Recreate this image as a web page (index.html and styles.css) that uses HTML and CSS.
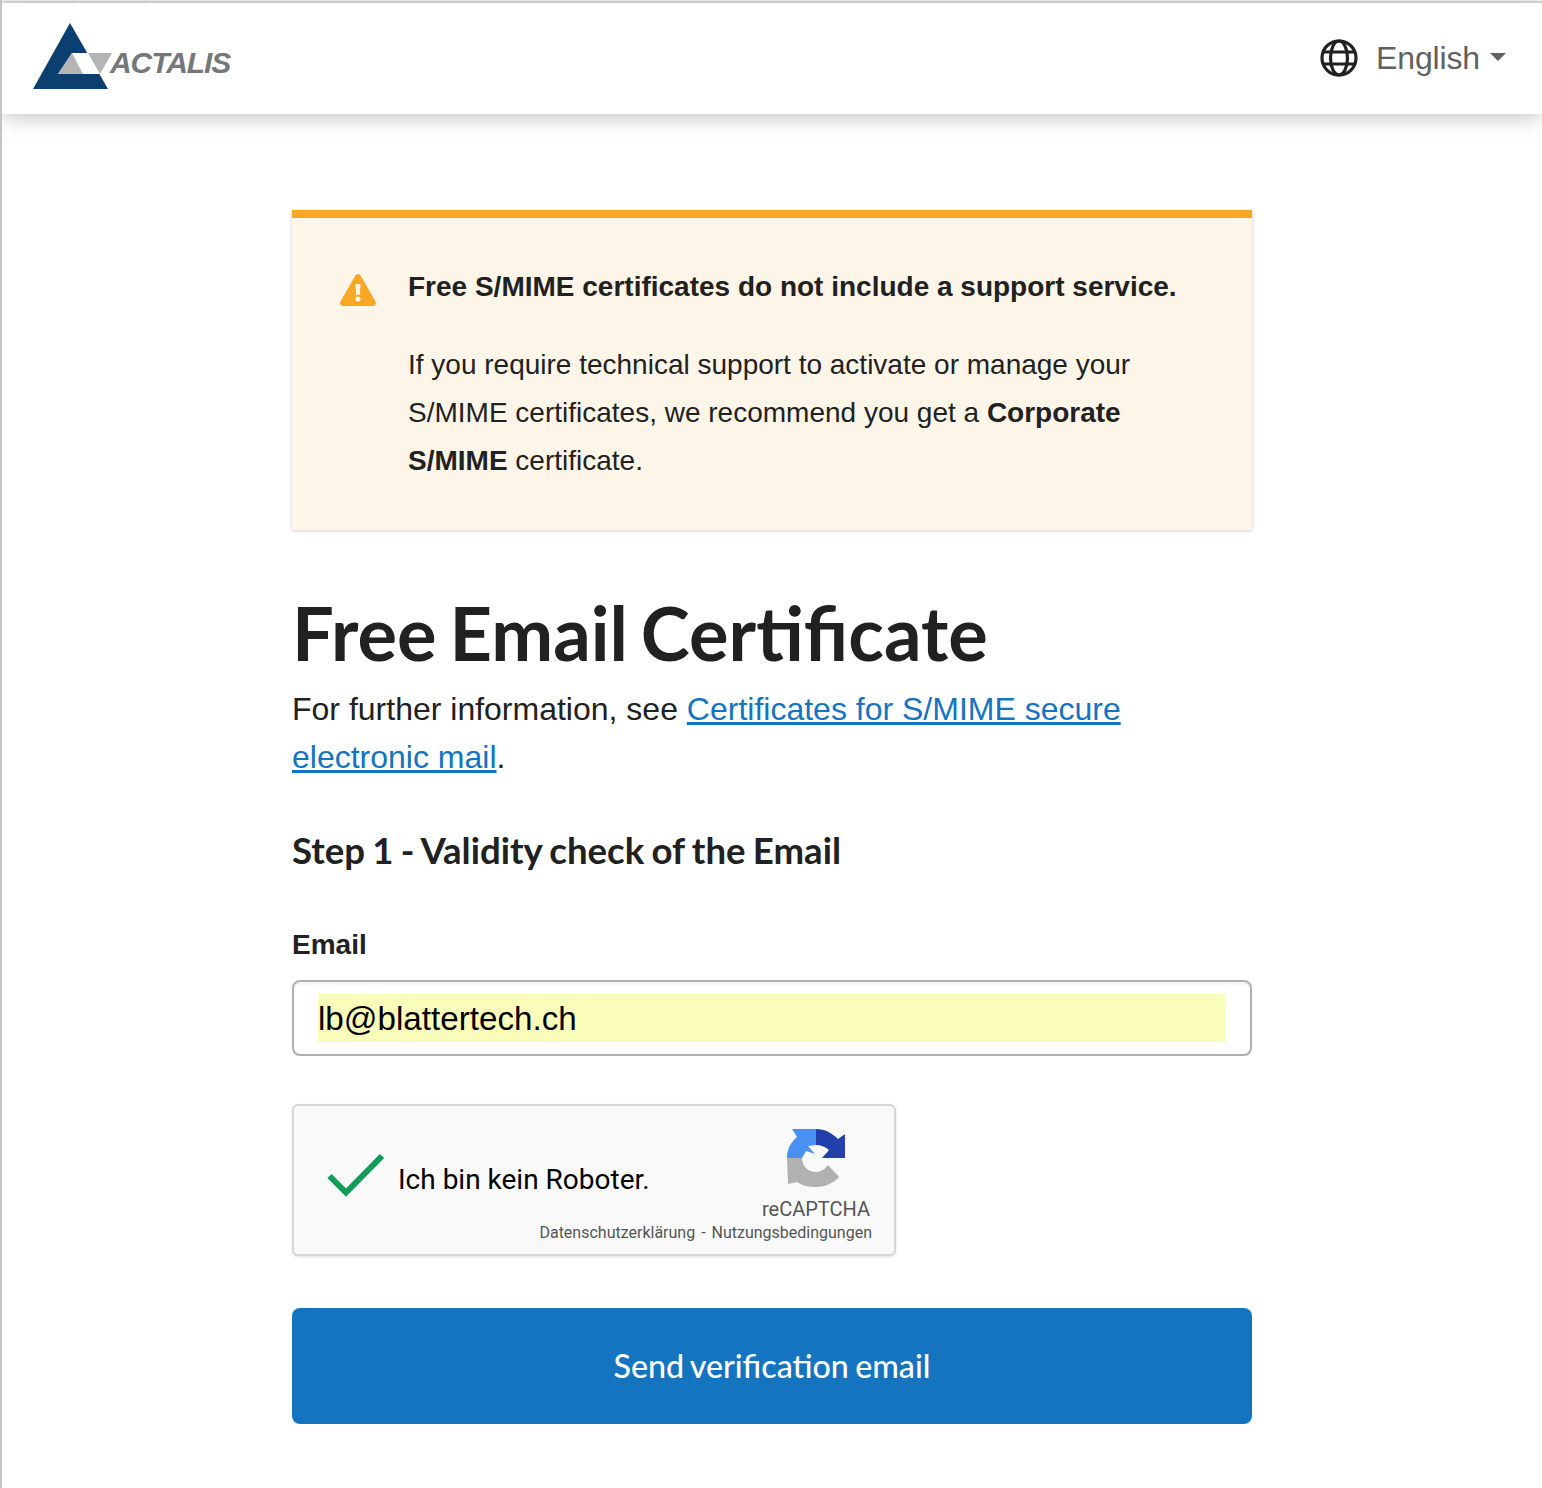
FILE: index.html
```html
<!DOCTYPE html>
<html lang="en">
<head>
    <meta charset="UTF-8">
    <meta name="viewport" content="width=device-width, initial-scale=1.0">
    <title>Free Email Certificate</title>
    <link rel="stylesheet" href="styles.css">
</head>
<body>
    <div class="tabstrip"><span class="tab"></span><span class="tab"></span></div>
    <header class="topbar">
        <a class="logo" href="#">
            <svg class="logo-mark" width="80" height="68" viewBox="0 0 80 68">
                <path fill="#0b3f6f" d="M37 0 L75 66 L0 66 Z"/>
                <path fill="#ffffff" d="M39 30 L66 30 L66 51 L25 51 Z"/>
                <path fill="#b4b6b6" d="M25 51 L39 30 L50 51 Z"/>
                <path fill="#b4b6b6" d="M55 30 L79 30 L67 51 Z"/>
            </svg>
            <span class="logo-text">ACTALIS</span>
        </a>
        <div class="lang">
            <svg class="globe" width="38" height="38" viewBox="0 0 38 38" fill="none" stroke="#212121" stroke-width="3.200">
                <circle cx="19" cy="19" r="17"/>
                <ellipse cx="19" cy="19" rx="8.500" ry="17"/>
                <path d="M3 13 H35 M3 25 H35"/>
            </svg>
            <span class="lang-name">English</span>
            <span class="caret"></span>
        </div>
    </header>

    <main class="content">
        <section class="notice">
            <svg class="notice-icon" width="36" height="32" viewBox="0 0 36 32">
                <path fill="#f9a825" d="M15.400 1.500 a3 3 0 0 1 5.200 0 L35.500 27.500 a3 3 0 0 1 -2.600 4.500 H3.100 a3 3 0 0 1 -2.600 -4.500 Z"/>
                <path fill="#fdf5e8" d="M15.500 10 h5 l-.7 11 h-3.600 Z"/>
                <circle fill="#fdf5e8" cx="18" cy="25" r="2.600"/>
            </svg>
            <div class="notice-body">
                <p class="notice-title">Free S/MIME certificates do not include a support service.</p>
                <p>If you require technical support to activate or manage your S/MIME certificates, we recommend you get a <strong>Corporate S/MIME</strong> certificate.</p>
            </div>
        </section>

        <h1>Free Email Certificate</h1>
        <p class="intro">For further information, see <a href="#">Certificates for S/MIME secure electronic mail</a>.</p>

        <h2>Step 1 - Validity check of the Email</h2>

        <form class="form">
            <label class="field-label" for="email">Email</label>
            <div class="input-box">
                <input id="email" type="text" value="lb@blattertech.ch">
            </div>

            <div class="captcha">
                <svg class="captcha-check" width="58" height="44" viewBox="0 0 58 44" fill="none">
                    <path d="M2.500 23 L19 39.500 L55 3" stroke="#0f9d58" stroke-width="6"/>
                </svg>
                <span class="captcha-text">Ich bin kein Roboter.</span>
                <div class="captcha-brand">
                    <svg class="captcha-logo" width="62" height="62" viewBox="0 0 62 62">
                        <path fill="#4a90f0" d="M1 30 C1 21 5 14 11 9 L6 1 H30 V17 L22 18 L29 26 L20 23 L16 30 Z"/>
                        <path fill="#2440ab" d="M30 1 C39 1 46 5 52 11 L59 6 V30 H36 L43 22 C40 19 35 17 30 17 Z"/>
                        <path fill="#b1b1b1" d="M1 30 H16 C16 38 22 44 30 44 C35 44 39 41 42 37 L53 49 C48 55 39 59 30 59 C22 59 15 57 11 54 L2 56 Z"/>
                    </svg>
                    <span class="captcha-name">reCAPTCHA</span>
                    <span class="captcha-links">Datenschutzerklärung - Nutzungsbedingungen</span>
                </div>
            </div>

            <button class="send-btn" type="button">Send verification email</button>
        </form>
    </main>
</body>
</html>
```

FILE: styles.css
```css
* {
    box-sizing: border-box;
}
body {
    margin: 0;
    min-height: 1488px;
    background-color: white;
    color: #212121;
    font-family: "Liberation Sans", sans-serif;
    font-size: 28px;
    border-left: 2px solid #c4c4c4;
    overflow: hidden;
}
.tabstrip {
    display: flex;
    height: 3px;
    border-bottom: 2px solid #dcdcdc;
    background-color: #f4f4f4;
}
.tab {
    width: 72px;
    border-right: 1px solid #d4d4d4;
}
.topbar {
    display: flex;
    justify-content: space-between;
    align-items: center;
    height: 111px;
    padding: 0 36px 0 31px;
    background-color: white;
    box-shadow: 0 4px 20px rgba(0, 0, 0, 0.22);
}
.logo {
    display: flex;
    align-items: center;
    text-decoration: none;
    margin-top: -3px;
}
.logo-mark {
    filter: blur(0.4px);
}
.logo-text {
    margin-left: -3px;
    margin-top: 12px;
    font-family: "Liberation Sans", sans-serif;
    font-size: 30px;
    font-weight: bold;
    font-style: italic;
    letter-spacing: -1.100px;
    color: #757778;
}
.lang {
    display: flex;
    align-items: center;
    margin-top: -1px;
    color: #616161;
    font-size: 32px;
}
.globe {
    filter: blur(0.3px);
}
.lang-name {
    margin-left: 18px;
    letter-spacing: -0.150px;
}
.caret {
    margin-left: 10px;
    margin-top: -2px;
    border-top: 8px solid #616161;
    border-left: 8px solid transparent;
    border-right: 8px solid transparent;
}
.content {
    width: 960px;
    margin: 96px 0 0 290px;
}
.notice {
    display: flex;
    height: 320px;
    padding: 60px 40px 0 48px;
    background-color: #fdf5e8;
    border-top: 8px solid #f9a825;
    box-shadow: 0 1px 4px rgba(0, 0, 0, 0.2);
    line-height: 48px;
}
.notice-icon {
    flex-shrink: 0;
    margin-top: -4px;
}
.notice-body {
    margin-left: 32px;
    margin-top: -15px;
}
.notice-body p {
    margin: 0;
}
.notice-body .notice-title {
    margin-bottom: 30px;
    font-weight: bold;
}
strong {
    font-weight: bold;
}
h1 {
    margin: 55px 0 0;
    font-family: Lato, sans-serif;
    font-size: 74px;
    font-weight: bold;
    word-spacing: -5px;
    line-height: 96px;
}
.intro {
    margin: 4px 0 0;
    font-size: 32px;
    line-height: 48px;
}
.intro a {
    color: #1474bf;
}
h2 {
    margin: 45px 0 0;
    font-family: Lato, sans-serif;
    font-size: 36.600px;
    font-weight: bold;
    word-spacing: -1.600px;
    line-height: 48px;
}
.form {
    margin-top: 47px;
}
.field-label {
    display: block;
    font-weight: bold;
    line-height: 48px;
}
.input-box {
    margin-top: 11px;
    height: 76px;
    padding: 12px 24px;
    border: 2px solid #b0b0b0;
    border-radius: 8px;
    box-shadow: inset 0 2px 4px rgba(0, 0, 0, 0.06);
}
.input-box input {
    display: block;
    width: 100%;
    height: 48px;
    padding: 2px 0 0;
    border: none;
    outline: none;
    background-color: #fafdb9;
    color: black;
    font-family: "Liberation Sans", sans-serif;
    font-size: 33.200px;
}
.captcha {
    display: flex;
    align-items: center;
    width: 604px;
    height: 152px;
    margin-top: 48px;
    padding: 0 22px 0 33px;
    background-color: #f9f9f9;
    border: 2px solid #d6d6d6;
    border-radius: 6px;
    box-shadow: 0 1px 3px rgba(0, 0, 0, 0.12);
    position: relative;
    font-family: Roboto, sans-serif;
}
.captcha-check {
    margin-bottom: 10px;
    filter: blur(0.5px);
}
.captcha-text {
    margin-left: 13px;
    margin-bottom: 2px;
    color: black;
    font-size: 28px;
}
.captcha-brand {
    position: absolute;
    right: 22px;
    top: 22px;
    display: flex;
    flex-direction: column;
    align-items: flex-end;
}
.captcha-logo {
    margin-right: 24px;
    filter: blur(0.5px);
}
.captcha-name {
    margin: 7px 2px 0 0;
    color: #555555;
    font-size: 20px;
    line-height: 24px;
}
.captcha-links {
    margin-top: 1px;
    color: #555555;
    font-size: 16px;
    word-spacing: 2px;
    line-height: 22px;
}
.send-btn {
    display: block;
    width: 100%;
    height: 116px;
    margin-top: 52px;
    padding-bottom: 3px;
    border: none;
    border-radius: 8px;
    background-color: #1474bf;
    color: white;
    font-family: Lato, sans-serif;
    font-size: 32.200px;
    font-weight: 500;
    word-spacing: -1.800px;
}
```
